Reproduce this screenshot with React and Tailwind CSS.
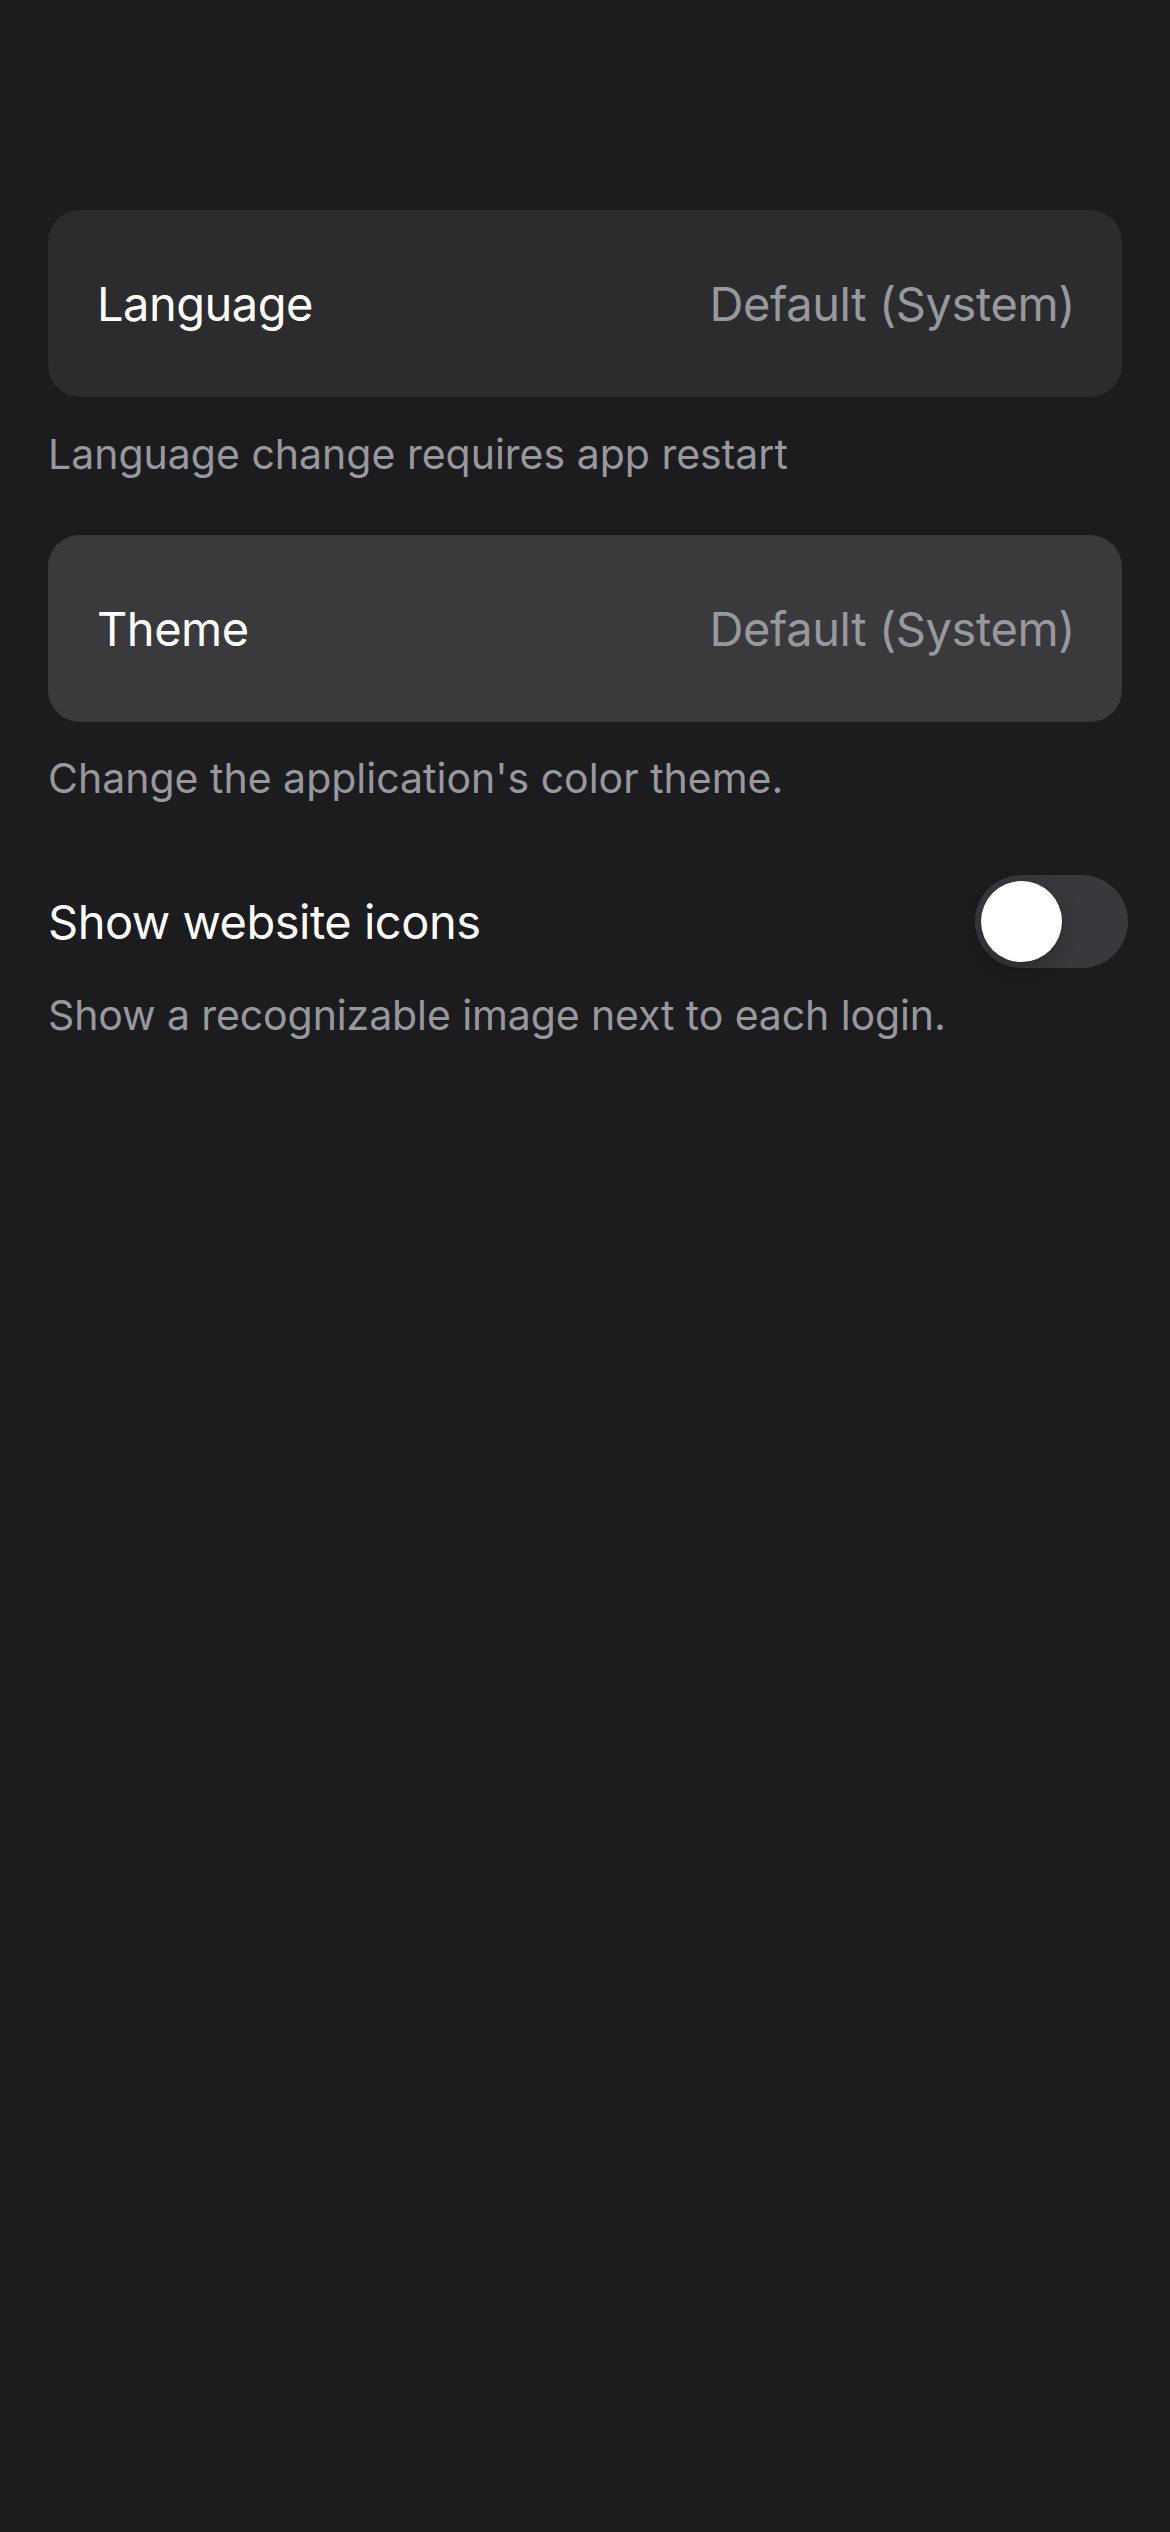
export default function App() {
  return (
    <div
      className="min-h-[2532px] w-full bg-[#1c1c1e] px-[48px] pt-[210px]"
      style={{ fontFamily: 'Inter, "Noto Sans", sans-serif' }}
    >
      <div className="flex h-[187px] items-center justify-between rounded-[32px] bg-[#2c2c2e] pl-[49px] pr-[47px]">
        <span className="text-[47px] leading-[60px] tracking-[-0.5px] text-white">Language</span>
        <span className="text-[47px] leading-[60px] tracking-[-0.4px] text-[#98989f]">Default (System)</span>
      </div>
      <p className="mt-[33px] text-[41px] leading-[48px] text-[#98989f]">
        Language change requires app restart
      </p>
      <div className="mt-[57px] flex h-[187px] items-center justify-between rounded-[32px] bg-[#3a3a3c] pl-[49px] pr-[47px]">
        <span className="text-[47px] leading-[60px] tracking-[-0.5px] text-white">Theme</span>
        <span className="text-[47px] leading-[60px] tracking-[-0.4px] text-[#98989f]">Default (System)</span>
      </div>
      <p className="mt-[32px] text-[41px] leading-[48px] text-[#98989f]">
        Change the application's color theme.
      </p>
      <div className="mt-[73px] flex h-[93px] items-center justify-between">
        <span className="text-[47px] leading-[60px] tracking-[-0.5px] text-white">Show website icons</span>
        <div className="relative -mr-[6px] h-[93px] w-[153px] rounded-full bg-[#39393d]">
          <div className="absolute left-[6px] top-[6px] h-[81px] w-[81px] rounded-full bg-white shadow-[0_6px_18px_rgba(0,0,0,0.25)]" />
        </div>
      </div>
      <p className="mt-[23px] text-[41px] leading-[48px] tracking-[-0.1px] text-[#98989f]">
        Show a recognizable image next to each login.
      </p>
    </div>
  );
}
